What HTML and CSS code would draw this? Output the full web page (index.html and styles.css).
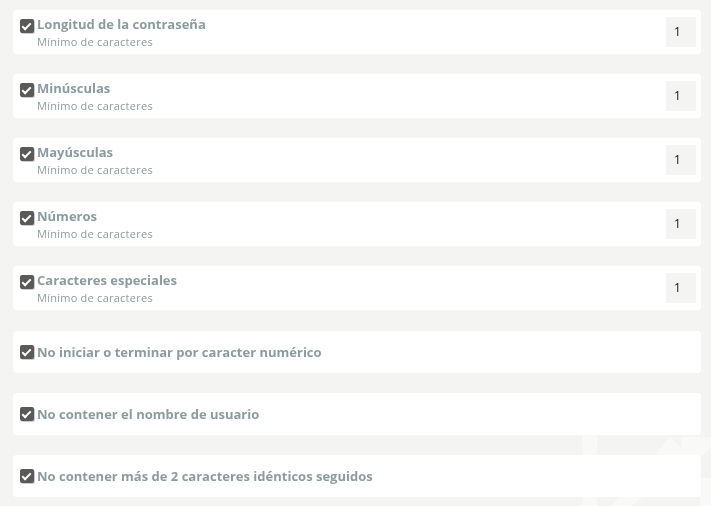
FILE: index.html
```html
<!DOCTYPE html>
<html>
<head lang="es">
    <meta charset="UTF-8">
    <title>Reglas de contraseña</title>
    <link rel="stylesheet" href="styles.css">
</head>
<body>
<svg class="mark" width="140" height="80" viewBox="0 0 140 80">
    <rect x="11" y="8" width="15" height="72"/>
    <path d="M99 11 L130 42 L112 60 L100 48 L60 80 L40 80 Z"/>
    <path d="M110 11 L140 11 L140 21 L121 40 L110 29 Z"/>
    <rect x="129" y="52" width="11" height="28"/>
</svg>
<div class="rules">
    <div class="rule">
        <span class="check"></span>
        <div class="info">
            <div class="title">Longitud de la contraseña</div>
            <div class="sub">Mínimo de caracteres</div>
        </div>
        <div class="num">1</div>
    </div>
    <div class="rule">
        <span class="check"></span>
        <div class="info">
            <div class="title">Minúsculas</div>
            <div class="sub">Mínimo de caracteres</div>
        </div>
        <div class="num">1</div>
    </div>
    <div class="rule">
        <span class="check"></span>
        <div class="info">
            <div class="title">Mayúsculas</div>
            <div class="sub">Mínimo de caracteres</div>
        </div>
        <div class="num">1</div>
    </div>
    <div class="rule">
        <span class="check"></span>
        <div class="info">
            <div class="title">Números</div>
            <div class="sub">Mínimo de caracteres</div>
        </div>
        <div class="num">1</div>
    </div>
    <div class="rule">
        <span class="check"></span>
        <div class="info">
            <div class="title">Caracteres especiales</div>
            <div class="sub">Mínimo de caracteres</div>
        </div>
        <div class="num">1</div>
    </div>
    <div class="rule simple">
        <span class="check"></span>
        <div class="title">No iniciar o terminar por caracter numérico</div>
    </div>
    <div class="rule simple">
        <span class="check"></span>
        <div class="title">No contener el nombre de usuario</div>
    </div>
    <div class="rule simple">
        <span class="check"></span>
        <div class="title">No contener más de 2 caracteres idénticos seguidos</div>
    </div>
</div>
</body>
</html>
```

FILE: styles.css
```css
* {
    margin: 0;
    padding: 0;
    box-sizing: border-box;
}

body {
    background: #f4f4f2;
    font-family: "Open Sans", "Liberation Sans", sans-serif;
    color: #8c9c9e;
}

/* marca de agua del fondo */
.mark {
    position: fixed;
    right: 0;
    bottom: 0;
    fill: #f9f9f8;
    z-index: 0;
}

.rules {
    position: relative;
    z-index: 1;
    display: flex;
    flex-direction: column;
    padding: 10px 10px 0 13px;
}

.rule {
    display: flex;
    align-items: flex-start;
    background: #fff;
    border-radius: 4px;
    height: 44px;
    padding: 6px 5px 0 7px;
    margin-bottom: 20px;
}

.rule:not(.simple) + .simple {
    margin-top: 1px;
}

.rule.simple {
    height: 42px;
    align-items: center;
    padding-top: 0;
}

.check {
    position: relative;
    flex: none;
    width: 14px;
    height: 14px;
    margin-top: 3px;
    background: #5b5a58;
    border-radius: 2px;
    box-shadow: 1px 1px 0 #c9cfd0;
}

.rule.simple .check {
    margin-top: 0;
}

.check::after {
    content: "";
    position: absolute;
    left: 4px;
    top: 2px;
    width: 3px;
    height: 7px;
    border: solid #fff;
    border-width: 0 2px 2px 0;
    transform: rotate(45deg);
}

.info {
    flex: 1;
    padding-left: 3px;
}

.rule.simple .title {
    padding-left: 3px;
}

.title {
    font-size: 13px;
    font-weight: 700;
    line-height: 16px;
}

.sub {
    margin-top: 2px;
    font-size: 11px;
    letter-spacing: 0.25px;
    line-height: 16px;
}

.num {
    flex: none;
    width: 30px;
    height: 30px;
    margin-top: 1px;
    background: #f4f4f2;
    color: #111;
    font-size: 12px;
    line-height: 30px;
    padding-left: 8px;
}
```
